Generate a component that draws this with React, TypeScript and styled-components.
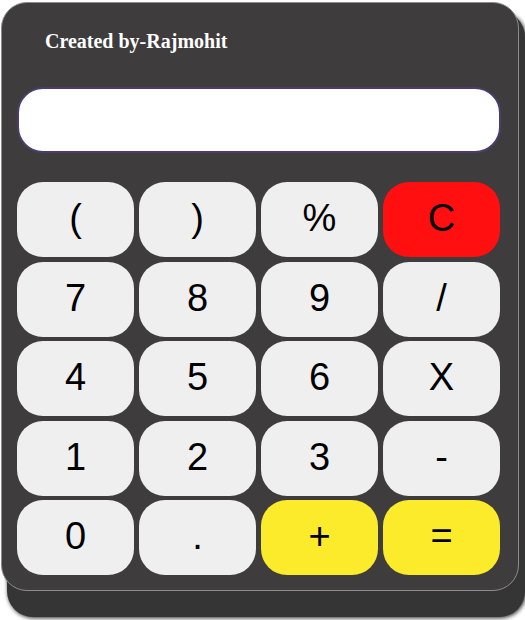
import React from "react";
import styled, { createGlobalStyle } from "styled-components";

const Global = createGlobalStyle`
  html, body { margin: 0; padding: 0; background: #ffffff; }
  body { padding: 2px 0 40px 1px; min-height: 620px; box-sizing: border-box; }
`;

const Card = styled.div`
  box-sizing: border-box;
  width: 518px;
  height: 589px;
  background: #3e3c3d;
  border: 1px solid #8c8c8c;
  border-radius: 26px;
  padding: 0 17px 0 15px;
  box-shadow:
    6px 9px 0 #363535,
    6px 26px 0 #363535,
    7px 27px 4px rgba(0, 0, 0, 0.85),
    7px 10px 4px rgba(0, 0, 0, 0.85);
`;

const Credit = styled.div`
  font-family: "Liberation Serif", "Times New Roman", serif;
  font-weight: bold;
  font-size: 20px;
  color: #ffffff;
  padding: 27px 0 0 28px;
  height: 29px;
  line-height: 23px;
`;

const Display = styled.div`
  box-sizing: border-box;
  margin-top: 28px;
  height: 66px;
  width: 484px;
  background: #ffffff;
  border: 2px solid #4c3d6c;
  border-radius: 26px;
`;

const Grid = styled.div`
  margin-top: 29px;
  display: grid;
  grid-template-columns: repeat(4, 117px);
  grid-auto-rows: 75px;
  column-gap: 5px;
  row-gap: 4.5px;
`;

type Variant = "plain" | "red" | "yellow";

const Key = styled.button<{ $variant: Variant }>`
  border: none;
  margin: 0;
  padding: 0 0 2px 0;
  border-radius: 26px;
  font-family: "Liberation Sans", Arial, sans-serif;
  font-size: 38px;
  color: #000000;
  display: flex;
  align-items: center;
  justify-content: center;
  background: ${(p) =>
    p.$variant === "red" ? "#ff0f0f" : p.$variant === "yellow" ? "#fbeb2a" : "#efefef"};
`;

const keys: { label: string; variant: Variant }[] = [
  { label: "(", variant: "plain" },
  { label: ")", variant: "plain" },
  { label: "%", variant: "plain" },
  { label: "C", variant: "red" },
  { label: "7", variant: "plain" },
  { label: "8", variant: "plain" },
  { label: "9", variant: "plain" },
  { label: "/", variant: "plain" },
  { label: "4", variant: "plain" },
  { label: "5", variant: "plain" },
  { label: "6", variant: "plain" },
  { label: "X", variant: "plain" },
  { label: "1", variant: "plain" },
  { label: "2", variant: "plain" },
  { label: "3", variant: "plain" },
  { label: "-", variant: "plain" },
  { label: "0", variant: "plain" },
  { label: ".", variant: "plain" },
  { label: "+", variant: "yellow" },
  { label: "=", variant: "yellow" },
];

export default function App() {
  return (
    <>
      <Global />
      <Card>
        <Credit>Created by-Rajmohit</Credit>
        <Display />
        <Grid>
          {keys.map((k) => (
            <Key key={k.label} $variant={k.variant}>
              {k.label}
            </Key>
          ))}
        </Grid>
      </Card>
    </>
  );
}
